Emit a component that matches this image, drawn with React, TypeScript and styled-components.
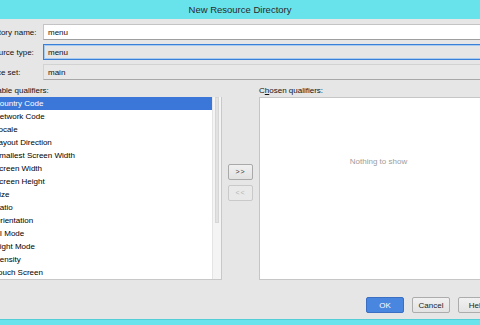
import * as React from 'react'
import styled, { createGlobalStyle, css } from 'styled-components'

const GlobalStyle = createGlobalStyle`
  html, body {
    margin: 0;
    padding: 0;
    overflow: hidden;
    background: #e6e6e6;
  }
  body {
    font-family: "Liberation Sans", Arial, sans-serif;
    font-size: 8px;
    color: #111111;
  }
`

const qualifiers = [
  'Country Code',
  'Network Code',
  'Locale',
  'Layout Direction',
  'Smallest Screen Width',
  'Screen Width',
  'Screen Height',
  'Size',
  'Ratio',
  'Orientation',
  'UI Mode',
  'Night Mode',
  'Density',
  'Touch Screen',
  'Keyboard',
  'Text Input',
  'Navigation State',
  'Navigation Method',
  'Dimension',
  'Version',
]

const S = {
  Window: styled.div`
    width: 480px;
    height: 325px;
    display: flex;
    flex-direction: column;
    overflow: hidden;
    background: #e6e6e6;
  `,
  TitleBar: styled.div`
    height: 19px;
    flex: none;
    background: #68e3eb;
    display: flex;
    align-items: center;
    justify-content: center;
    font-size: 9.5px;
    color: #2a2a2a;
  `,
  Body: styled.div`
    flex: 1;
    overflow: hidden;
  `,
  BottomEdge: styled.div`
    height: 6px;
    flex: none;
    box-sizing: border-box;
    background: #6ae4ec;
    border-top: 1px solid #53cdd6;
  `,
  Dialog: styled.div`
    margin-left: -20px;
    width: 517px;
    padding-top: 5px;
    display: flex;
    flex-direction: column;
  `,
  Form: styled.div`
    display: grid;
    grid-template-columns: 63px 1fr;
    row-gap: 4px;
    align-items: center;
  `,
  Label: styled.label`
    white-space: nowrap;
  `,
  Field: styled.div<{ $kind: 'text' | 'combo' | 'readonly' }>`
    height: 16px;
    box-sizing: border-box;
    display: flex;
    align-items: center;
    padding-left: 4px;
    ${(p) =>
      p.$kind === 'text'
        ? css`
            background: #ffffff;
            border: 1px solid #c4c4c4;
            border-bottom-color: #9f9f9f;
          `
        : p.$kind === 'combo'
          ? css`
              background: #e6e6e6;
              border: 1px solid #3b7fd8;
              box-shadow: inset 0 0 0 1px #a9cbf0;
            `
          : css`
              background: #e8e8e8;
              border: 1px solid #d2d2d2;
              border-bottom-color: #a8a8a8;
            `}
  `,
  Qualifiers: styled.div`
    margin-top: 5px;
    display: grid;
    grid-template-columns: 242px 37px 238px;
    grid-template-rows: 12px 183px;
  `,
  QualLabel: styled.div`
    line-height: 12px;
    white-space: nowrap;
  `,
  ListFrame: styled.div`
    display: flex;
    box-sizing: border-box;
    border: 1px solid #c8c8c8;
    border-top: none;
    background: #ffffff;
    overflow: hidden;
  `,
  List: styled.ul`
    flex: 1;
    margin: 0;
    padding: 0;
    list-style: none;
    overflow: hidden;
  `,
  Item: styled.li<{ $selected?: boolean }>`
    height: 13px;
    line-height: 13px;
    padding-left: 13px;
    white-space: nowrap;
    color: ${(p) => (p.$selected ? '#ffffff' : '#000000')};
    background: ${(p) => (p.$selected ? '#3a77d8' : 'transparent')};
  `,
  ScrollTrack: styled.div`
    width: 9px;
    flex: none;
    background: #f4f4f4;
    border-left: 1px solid #e4e4e4;
    box-sizing: border-box;
  `,
  ScrollThumb: styled.div`
    height: 126px;
    margin: 0 2px;
    box-sizing: border-box;
    background: #e2e2e2;
    border: 1px solid #d6d6d6;
  `,
  Mover: styled.div`
    display: flex;
    flex-direction: column;
    align-items: center;
    justify-content: center;
    gap: 5px;
    padding-bottom: 13px;
  `,
  SmallButton: styled.button<{ $disabled?: boolean }>`
    width: 25px;
    height: 16px;
    padding: 0;
    box-sizing: border-box;
    font-family: inherit;
    font-size: 7px;
    letter-spacing: 1px;
    border-radius: 2px;
    border: 1px solid ${(p) => (p.$disabled ? '#c9c9c9' : '#a9a9a9')};
    color: ${(p) => (p.$disabled ? '#b4b4b4' : '#333333')};
    background: ${(p) =>
      p.$disabled ? '#e9e9e9' : 'linear-gradient(#f0f0f0, #e2e2e2)'};
  `,
  Chosen: styled.div`
    box-sizing: border-box;
    background: #ffffff;
    border: 1px solid #c6c6c6;
    border-right: none;
    padding-top: 59px;
    text-align: center;
    color: #9c9c9c;
  `,
  ButtonBar: styled.div`
    margin-top: 17px;
    display: flex;
    justify-content: flex-end;
    gap: 8px;
    padding-right: 1px;
  `,
  Button: styled.button<{ $primary?: boolean }>`
    width: 38px;
    height: 16px;
    padding: 0;
    box-sizing: border-box;
    font-family: inherit;
    font-size: 8px;
    border-radius: 2px;
    border: 1px solid ${(p) => (p.$primary ? '#3a6fc4' : '#acacac')};
    color: ${(p) => (p.$primary ? '#ffffff' : '#1e1e1e')};
    background: ${(p) =>
      p.$primary ? '#4886df' : 'linear-gradient(#f1f1f1, #e3e3e3)'};
  `,
}

export default function App() {
  const [selected] = React.useState(0)

  return (
    <>
      <GlobalStyle />
      <S.Window>
        <S.TitleBar>New Resource Directory</S.TitleBar>
        <S.Body>
          <S.Dialog>
            <S.Form>
              <S.Label>Directory name:</S.Label>
              <S.Field $kind="text">menu</S.Field>
              <S.Label>Resource type:</S.Label>
              <S.Field $kind="combo">menu</S.Field>
              <S.Label>Source set:</S.Label>
              <S.Field $kind="readonly">main</S.Field>
            </S.Form>

            <S.Qualifiers>
              <S.QualLabel>Available qualifiers:</S.QualLabel>
              <div />
              <S.QualLabel>
                C<u>h</u>osen qualifiers:
              </S.QualLabel>

              <S.ListFrame>
                <S.List>
                  {qualifiers.map((q, i) => (
                    <S.Item key={q} $selected={i === selected}>
                      {q}
                    </S.Item>
                  ))}
                </S.List>
                <S.ScrollTrack>
                  <S.ScrollThumb />
                </S.ScrollTrack>
              </S.ListFrame>

              <S.Mover>
                <S.SmallButton>&gt;&gt;</S.SmallButton>
                <S.SmallButton $disabled>&lt;&lt;</S.SmallButton>
              </S.Mover>

              <S.Chosen>Nothing to show</S.Chosen>
            </S.Qualifiers>

            <S.ButtonBar>
              <S.Button $primary>OK</S.Button>
              <S.Button>Cancel</S.Button>
              <S.Button>Help</S.Button>
            </S.ButtonBar>
          </S.Dialog>
        </S.Body>
        <S.BottomEdge />
      </S.Window>
    </>
  )
}
